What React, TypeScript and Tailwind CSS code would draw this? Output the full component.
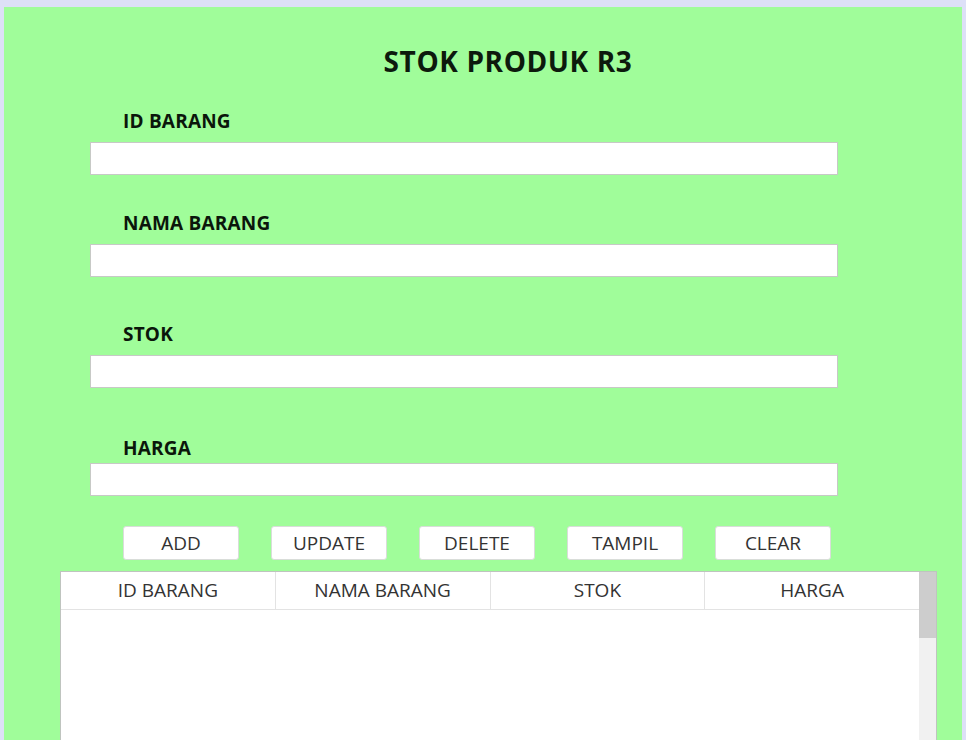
import React from "react";

const labels = ["ID BARANG", "NAMA BARANG", "STOK", "HARGA"];
const buttons = ["ADD", "UPDATE", "DELETE", "TAMPIL", "CLEAR"];

export default function App() {
  return (
    <div
      className="w-[966px] h-[740px] bg-[#dde0f7] pt-[7px] pl-[4px] pr-[4px] overflow-hidden"
      style={{ fontFamily: '"Open Sans", "Noto Sans", sans-serif' }}
    >
      <div className="h-full bg-[#a0fd9a] flex flex-col">
        <div className="h-[68px] flex items-end justify-center pl-[50px]">
          <h1 className="text-[28px] leading-[28px] tracking-[0.6px] font-bold text-[#0d1a0d]">STOK PRODUK R3</h1>
        </div>
        <div className="pl-[119px] mt-[35px] text-[19px] leading-[22px] tracking-[0.2px] font-bold text-[#0b160b]">ID BARANG</div>
        <div className="ml-[86px] mt-[10px] w-[748px] h-[33px] bg-white border border-[#c7c9c6]" />
        <div className="pl-[119px] mt-[37px] text-[19px] leading-[22px] tracking-[0.2px] font-bold text-[#0b160b]">NAMA BARANG</div>
        <div className="ml-[86px] mt-[10px] w-[748px] h-[33px] bg-white border border-[#c7c9c6]" />
        <div className="pl-[119px] mt-[46px] text-[19px] leading-[22px] tracking-[0.2px] font-bold text-[#0b160b]">STOK</div>
        <div className="ml-[86px] mt-[10px] w-[748px] h-[33px] bg-white border border-[#c7c9c6]" />
        <div className="pl-[119px] mt-[49px] text-[19px] leading-[22px] tracking-[0.2px] font-bold text-[#0b160b]">HARGA</div>
        <div className="ml-[86px] mt-[4px] w-[748px] h-[33px] bg-white border border-[#c7c9c6]" />
        <div className="ml-[119px] mt-[30px] flex gap-[32px]">
          {buttons.map((b) => (
            <div
              key={b}
              className="w-[116px] h-[34px] bg-white rounded-[3px] border border-[#d9ddd9] flex items-center justify-center text-[19px] text-[#333]"
            >
              {b}
            </div>
          ))}
        </div>
        <div className="ml-[56px] mt-[11px] w-[877px] flex-1 bg-white border border-[#bfc4bf] border-b-0 flex">
          <div className="flex-1 flex flex-col">
            <div className="h-[38px] flex border-b border-[#e3e3e3]">
              {labels.map((l, i) => (
                <div
                  key={l}
                  className={`flex-1 flex items-center justify-center text-[19px] text-[#333] ${i < 3 ? "border-r border-[#e3e3e3]" : ""}`}
                >
                  {l}
                </div>
              ))}
            </div>
            <div className="flex-1" />
          </div>
          <div className="w-[17px] bg-[#f1f1f1] flex flex-col">
            <div className="h-[66px] bg-[#cdcdcd]" />
          </div>
        </div>
      </div>
    </div>
  );
}
